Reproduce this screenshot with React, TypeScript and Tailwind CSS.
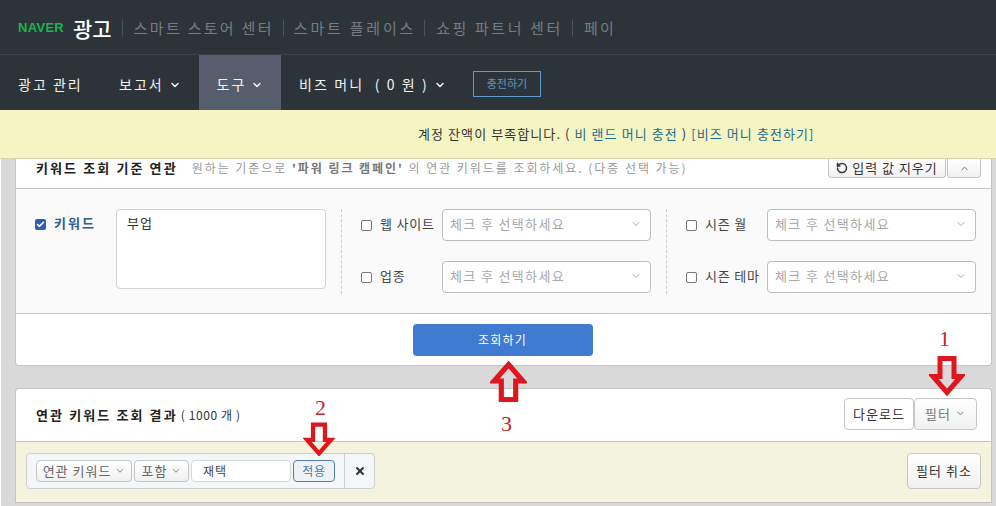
import React from 'react';
import { ChevronDown, ChevronUp, RotateCcw, X, Check } from 'lucide-react';

const Arrow = ({ className, up }: { className: string; up?: boolean }) => (
    <svg viewBox="0 0 36 40" className={className} fill="none">
        <path
            d={up ? 'M18 3 L32 19 L25 19 L25 37 L11 37 L11 19 L4 19 Z' : 'M11 3 L25 3 L25 21 L32 21 L18 37 L4 21 L11 21 Z'}
            stroke="#e0161e"
            strokeWidth="5"
            strokeLinejoin="miter"
        />
    </svg>
);

const Num = ({ className, children }: { className: string; children: React.ReactNode }) => (
    <span className={`absolute font-['Liberation_Serif',serif] text-[22px] leading-none text-[#c0272d] ${className}`}>{children}</span>
);

const Picker = () => (
    <div className="flex h-8 flex-1 items-center justify-between rounded border border-[#bdbdbd] bg-white pb-[2px] pl-[7px] pr-2 text-[13px] tracking-[1.35px] text-[#a8a8a8]">
        <span>체크 후 선택하세요</span>
        <ChevronDown size={12} className="text-[#aaa]" />
    </div>
);

const Box = () => <span className="h-[11px] w-[11px] shrink-0 rounded-[2px] border border-[#777] bg-white" />;

const Field = ({ label }: { label: string }) => (
    <div className="flex items-center">
        <Box />
        <span className="ml-[8px] w-[62px] whitespace-nowrap pb-[2px] text-[13px] tracking-[0.8px] text-[#444]">{label}</span>
        <Picker />
    </div>
);

const SmallBtn = ({ children, className = '' }: { children: React.ReactNode; className?: string }) => (
    <div className={`flex items-center justify-center rounded border border-[#c6c6c6] bg-gradient-to-b from-white to-[#f1f1f1] text-[13px] tracking-[1px] text-[#333] ${className}`}>
        {children}
    </div>
);

const App: React.FC = () => {
    return (
        <div className="relative h-[506px] w-[996px] overflow-hidden bg-[#d9d9d9] font-['Noto_Sans_CJK_KR','Noto_Sans',sans-serif]">
            <div className="flex h-[55px] items-center border-b border-[#3a4248] bg-[#2d3439] pl-[18px] pt-[2px] text-[15px] tracking-[2.3px] whitespace-nowrap text-[#757d82]">
                <span className="font-['Liberation_Sans',sans-serif] text-[13px] font-black tracking-[0.3px] text-[#19b44a]">NAVER</span>
                <span className="ml-[9px] text-[21px] font-medium leading-none tracking-normal text-white">광고</span>
                <span className="ml-[10px] h-[16px] w-px bg-[#4a5258]" />
                <span className="ml-[11px]">스마트 스토어 센터</span>
                <span className="ml-[9px] h-[16px] w-px bg-[#4a5258]" />
                <span className="ml-[10px] tracking-[2.8px]">스마트 플레이스</span>
                <span className="ml-[8px] h-[16px] w-px bg-[#4a5258]" />
                <span className="ml-[11px] tracking-[2.6px]">쇼핑 파트너 센터</span>
                <span className="ml-[9px] h-[16px] w-px bg-[#4a5258]" />
                <span className="ml-[11px]">페이</span>
            </div>

            <div className="flex h-[55px] items-center bg-[#2d3439] pl-[18px] text-[14px] tracking-[2px] text-[#f2f2f2]">
                <span className="w-[101px] translate-y-[2px]">광고 관리</span>
                <span className="flex w-[80px] translate-y-[2px] items-center gap-[5px]">
                    보고서 <ChevronDown size={12} strokeWidth={3} />
                </span>
                <span className="flex h-full w-[82px] items-center justify-center gap-[5px] bg-[#565e6d] pt-1">
                    도구 <ChevronDown size={12} strokeWidth={3} />
                </span>
                <span className="ml-[18px] flex w-[174px] translate-y-[2px] items-center gap-[5px] whitespace-nowrap tracking-[2.1px]">
                    비즈 머니 &nbsp;( 0 원 ) <ChevronDown size={12} strokeWidth={3} />
                </span>
                <span className="flex h-[26px] w-[68px] translate-y-[1px] items-center justify-center border border-[#5b9bd0] text-[11px] tracking-normal text-[#6096c4]">충전하기</span>
            </div>

            <div className="flex h-[49px] items-center border-b border-[#d5d5b0] bg-[#f5f5c4] pl-[418px] text-[13px] tracking-[1.08px] text-[#333] whitespace-nowrap">
                계정 잔액이 부족합니다. (&nbsp;<span className="text-[#1d6c8c]">비 랜드 머니 충전</span>&nbsp;)&nbsp;<span className="text-[#1d6c8c]">[비즈 머니 충전하기]</span>
            </div>

            <div className="ml-[15px] mr-1 flex h-[207px] flex-col rounded-b border border-t-0 border-[#c4c4c4] bg-white">
                <div className="flex h-[30px] items-start justify-between border-b border-[#c4c4c4] pl-[20px] pr-[10px]">
                    <div className="flex -translate-y-[1px] items-center whitespace-nowrap text-[12px]">
                        <span className="text-[13px] font-bold tracking-[2.1px] text-[#222]">키워드 조회 기준 연관</span>
                        <span className="ml-[14px] tracking-[1.95px] text-[#9a9a9a]">
                            원하는 기준으로 <b className="text-[#777]">'파워 링크 캠페인'</b> 의 연관 키워드를 조회하세요. (다중 선택 가능)
                        </span>
                    </div>
                    <div className="flex gap-px">
                        <SmallBtn className="h-[19px] w-[118px] gap-1 rounded-t-none border-t-0 text-[#222]">
                            <RotateCcw size={12} strokeWidth={3} /> 입력 값 지우기
                        </SmallBtn>
                        <SmallBtn className="h-[19px] w-[34px] rounded-t-none border-t-0">
                            <ChevronUp size={11} className="text-[#666]" />
                        </SmallBtn>
                    </div>
                </div>
                <div className="flex h-[125px] border-b border-[#c4c4c4] bg-[#fafafa] pt-[20px]">
                    <div className="flex w-[325px] items-start pl-[19px]">
                        <span className="mt-[10px] flex h-[11px] w-[11px] items-center justify-center rounded-[2px] bg-[#2f5fb0]">
                            <Check size={9} strokeWidth={4} className="text-white" />
                        </span>
                        <span className="ml-2 mt-[4px] w-[62px] text-[13px] font-bold tracking-[2px] text-[#2d5d94]">키워드</span>
                        <div className="h-[80px] w-[210px] rounded border border-[#d2d2d2] bg-white px-[10px] py-[3px] text-[13px] tracking-[1px] text-[#333]">부업</div>
                    </div>
                    <div className="h-[85px] border-l border-dashed border-[#cfcfcf]" />
                    <div className="flex w-[324px] flex-col gap-[20px] pl-[19px] pr-[15px]">
                        <Field label="웹 사이트" />
                        <Field label="업종" />
                    </div>
                    <div className="h-[85px] border-l border-dashed border-[#cfcfcf]" />
                    <div className="flex flex-1 flex-col gap-[20px] pl-[19px] pr-[15px]">
                        <Field label="시즌 월" />
                        <Field label="시즌 테마" />
                    </div>
                </div>
                <div className="flex flex-1 items-start justify-center pr-[2px] pt-[10px]">
                    <div className="flex h-8 w-[180px] items-center justify-center rounded bg-[#3f7bd0] text-[12px] tracking-[1.2px] text-white">조회하기</div>
                </div>
            </div>

            <div className="ml-[15px] mr-1 mt-[22px] rounded-t border border-b-0 border-[#c4c4c4] bg-white">
                <div className="flex h-[53px] items-center justify-between border-b border-[#c4c4c4] pb-[3px] pl-[20px] pr-[14px]">
                    <div className="flex translate-y-[1px] items-center whitespace-nowrap">
                        <span className="text-[13px] font-bold tracking-[2.1px] text-[#222]">연관 키워드 조회 결과</span>
                        <span className="ml-[3px] text-[12px] tracking-[0.6px] text-[#333]">( 1000 개 )</span>
                    </div>
                    <div className="flex">
                        <SmallBtn className="h-8 w-[70px] bg-none bg-white text-[#222]">다운로드</SmallBtn>
                        <SmallBtn className="h-8 w-[63px] gap-1 text-[#777]">
                            필터 <ChevronDown size={11} />
                        </SmallBtn>
                    </div>
                </div>
                <div className="flex h-[61px] items-center justify-between border-b border-[#c4c4c4] bg-[#f4f3de] pb-[2px] pl-[10px] pr-[10px]">
                    <div className="flex h-[36px] w-[349px] overflow-hidden rounded border border-[#cfcfcf] bg-[#f5f6f8]">
                        <div className="flex flex-1 items-center gap-[2px] border-r border-[#cfcfcf] pl-[9px]">
                            <SmallBtn className="h-[22px] w-[96px] gap-1 text-[12px] tracking-[0.8px] text-[#666]">
                                연관 키워드 <ChevronDown size={10} />
                            </SmallBtn>
                            <SmallBtn className="h-[22px] w-[55px] gap-1 text-[12px] tracking-[0.8px] text-[#666]">
                                포함 <ChevronDown size={10} />
                            </SmallBtn>
                            <div className="flex h-[22px] w-[100px] items-center rounded border border-[#d8d8d8] bg-white pl-[11px] text-[12px] tracking-[1px] text-[#444]">재택</div>
                            <div className="flex h-[22px] w-[42px] items-center justify-center rounded border border-[#4f7fa8] bg-[#eef2f6] text-[12px] tracking-[0.8px] text-[#4a7ca8]">적용</div>
                        </div>
                        <div className="flex w-[29px] items-center justify-center">
                            <X size={12} strokeWidth={4} className="text-[#333]" />
                        </div>
                    </div>
                    <SmallBtn className="h-[36px] w-[74px] text-[#222]">필터 취소</SmallBtn>
                </div>
            </div>

            <span className="absolute left-0 top-[159px] h-[347px] w-px bg-white" />
            <Num className="left-[939px] top-[328px]">1</Num>
            <Arrow className="absolute left-[929px] top-[355px] h-[41px] w-[36px]" />
            <Num className="left-[315px] top-[397px]">2</Num>
            <Arrow className="absolute left-[303px] top-[422px] h-[34px] w-[32px]" />
            <Num className="left-[501px] top-[413px]">3</Num>
            <Arrow up className="absolute left-[490px] top-[360px] h-[44px] w-[37px]" />
        </div>
    );
};

export default App;
